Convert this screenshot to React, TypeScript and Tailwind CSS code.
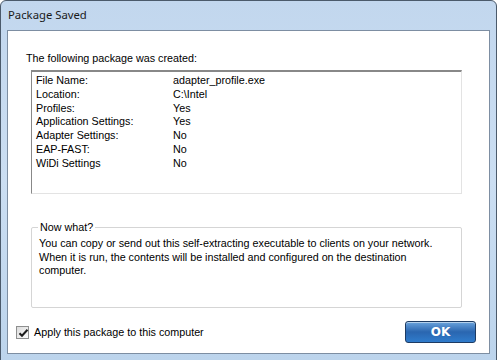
import React from "react";

const rows: [string, string][] = [
  ["File Name:", "adapter_profile.exe"],
  ["Location:", "C:\\Intel"],
  ["Profiles:", "Yes"],
  ["Application Settings:", "Yes"],
  ["Adapter Settings:", "No"],
  ["EAP-FAST:", "No"],
  ["WiDi Settings", "No"],
];

function CheckBox() {
  return (
    <div className="w-[13px] h-[13px] border border-[#8e8f8f] bg-gradient-to-br from-[#dcdcdc] to-[#fbfbfb] p-[1px]">
      <svg width="11" height="11" viewBox="0 0 11 11">
        <path d="M1.5 5.2 L4 7.8 L9.5 1.8" fill="none" stroke="#1c1c1c" strokeWidth="2" />
      </svg>
    </div>
  );
}

export default function App() {
  return (
    <div className="w-[497px] h-[360px] relative overflow-hidden bg-white">
      {/* Window frame */}
      <div className="w-[497px] h-[362px] rounded-t-[6px] border border-[#4b5a6b] bg-gradient-to-b from-[#c2d7ee] via-[#cbdef2] to-[#bcd4ec] flex flex-col">
        {/* Title bar */}
        <div className="h-[29px] flex items-center pl-[7px] font-['Noto_Sans',sans-serif] text-[11.3px] text-[#1a1a1a] shrink-0">
          Package Saved
        </div>

        {/* Client area */}
        <div className="mx-[6px] h-[324px] border border-[#7d8ea2] bg-white flex flex-col font-['Liberation_Sans',Arial,sans-serif] text-[10.75px] text-[#000]">
          <div className="mt-[21px] ml-[18px] leading-[13px]">The following package was created:</div>

          {/* Sunken list box */}
          <div className="mt-[5px] ml-[23px] w-[431px] h-[124px] border-t-2 border-l border-t-[#888] border-l-[#888] border-r border-b border-r-[#e3e3e3] border-b-[#e3e3e3] pt-[2px] pl-[4px]">
            {rows.map(([k, v]) => (
              <div key={k} className="flex h-[13.8px] leading-[13.8px]">
                <span className="w-[137px]">{k}</span>
                <span>{v}</span>
              </div>
            ))}
          </div>

          {/* Group box */}
          <div className="relative mt-[33px] ml-[23px] w-[431px] h-[81px] border border-[#d5d5d5] rounded-[2px] pt-[9px] pl-[7px] leading-[13.6px]">
            <span className="absolute -top-[7px] left-[6px] bg-white px-[2px] leading-[13px]">Now what?</span>
            <div>You can copy or send out this self-extracting executable to clients on your network.</div>
            <div>When it is run, the contents will be installed and configured on the destination</div>
            <div>computer.</div>
          </div>

          {/* Bottom row */}
          <div className="mt-[13px] flex items-center pl-[8px] pr-[13px]">
            <CheckBox />
            <span className="ml-[5px] leading-[13px]">Apply this package to this computer</span>
            <button className="ml-auto w-[71px] h-[22px] rounded-[3px] border border-[#1d3b63] bg-gradient-to-b from-[#6aa3dc] via-[#2a66b0] to-[#2f7ccc] shadow-[inset_0_1px_0_rgba(255,255,255,0.5)] text-white font-bold text-[12px] font-['DejaVu_Sans',sans-serif]">
              OK
            </button>
          </div>
        </div>
      </div>
    </div>
  );
}
